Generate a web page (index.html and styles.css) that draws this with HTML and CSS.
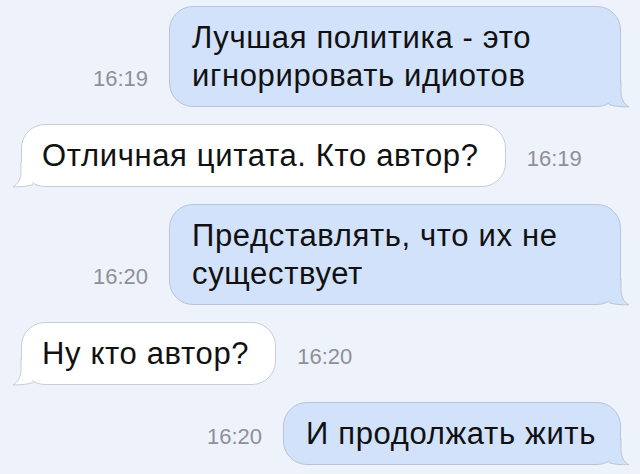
FILE: index.html
```html
<!DOCTYPE html>
<html>
<head>
  <title>Сообщения</title>
  <link rel="stylesheet" href="styles.css">
</head>
<body>
  <div class="chat">
    <div class="row out">
      <span class="time">16:19</span>
      <div class="bubble">
        Лучшая политика - это игнорировать идиотов
        <svg class="tail" viewBox="0 0 20 26"><path d="M0 23.6 C6 25.6 14 26 20 25.8 C15 23 12 18 12 11 L12 0"/></svg>
      </div>
    </div>
    <div class="row in">
      <div class="bubble">
        Отличная цитата. Кто автор?
        <svg class="tail" viewBox="0 0 20 26"><path d="M0 23.6 C6 25.6 14 26 20 25.8 C15 23 12 18 12 11 L12 0"/></svg>
      </div>
      <span class="time">16:19</span>
    </div>
    <div class="row out">
      <span class="time">16:20</span>
      <div class="bubble">
        Представлять, что их не существует
        <svg class="tail" viewBox="0 0 20 26"><path d="M0 23.6 C6 25.6 14 26 20 25.8 C15 23 12 18 12 11 L12 0"/></svg>
      </div>
    </div>
    <div class="row in">
      <div class="bubble">
        Ну кто автор?
        <svg class="tail" viewBox="0 0 20 26"><path d="M0 23.6 C6 25.6 14 26 20 25.8 C15 23 12 18 12 11 L12 0"/></svg>
      </div>
      <span class="time">16:20</span>
    </div>
    <div class="row out">
      <span class="time">16:20</span>
      <div class="bubble">
        И продолжать жить
        <svg class="tail" viewBox="0 0 20 26"><path d="M0 23.6 C6 25.6 14 26 20 25.8 C15 23 12 18 12 11 L12 0"/></svg>
      </div>
    </div>
  </div>
</body>
</html>
```

FILE: styles.css
```css
body {
  margin: 0;
  background-color: #eef2fb;
  font-family: "Liberation Sans", Arial, sans-serif;
}

.chat {
  display: flex;
  flex-direction: column;
  gap: 17px;
  padding: 6px 19px 0 21px;
}

.row {
  display: flex;
  align-items: last baseline;
  gap: 21px;
}

.row.out {
  justify-content: flex-end;
}

.bubble {
  position: relative;
  max-width: 452px;
  box-sizing: border-box;
  padding: 12px 24px 11px 22px;
  border-radius: 24px;
  border: 1px solid #b7c5da;
  background-color: #d2e2fa;
  color: #111;
  font-size: 31px;
  letter-spacing: 0.65px;
  line-height: 38px;
}

.in .bubble {
  max-width: none;
  white-space: nowrap;
  padding: 12px 26px 11px 20px;
  border-color: #c9cdd5;
  background-color: #fff;
}

.time {
  color: #8e9097;
  font-size: 22px;
}

/* little curled tail on the bottom corner */
.tail {
  position: absolute;
  width: 20px;
  height: 26px;
  right: -9px;
  bottom: -1px;
  overflow: visible;
}

.tail path {
  fill: #d2e2fa;
  stroke: #b7c5da;
  stroke-width: 1;
}

.in .tail {
  right: auto;
  left: -9px;
  transform: scaleX(-1);
}

.in .tail path {
  fill: #fff;
  stroke: #c9cdd5;
}
```
